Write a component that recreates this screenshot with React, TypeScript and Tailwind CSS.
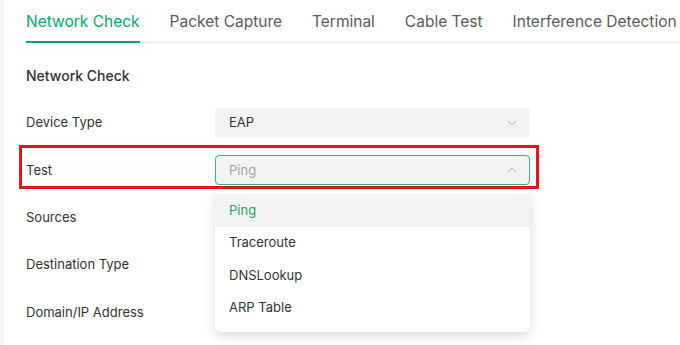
import { ChevronDown, ChevronUp } from 'lucide-react';

const TABS = ['Network Check', 'Packet Capture', 'Terminal', 'Cable Test', 'Interference Detection'];
const OPTIONS = ['Ping', 'Traceroute', 'DNSLookup', 'ARP Table'];

function Row({ label, children }: { label: string; children?: React.ReactNode }) {
  return (
    <div className="flex items-center h-[30px]">
      <div className="w-[189px] shrink-0 text-[13px] text-[#333]">{label}</div>
      <div className="w-[315px] relative">{children}</div>
    </div>
  );
}

export default function App() {
  return (
    <div
      className="flex w-[680px] h-[345px] overflow-hidden bg-white"
      style={{ fontFamily: 'Inter, "Noto Sans", sans-serif' }}
    >
      <div className="w-1 shrink-0 bg-[#f4f4f4]" />
      <div className="flex-1 pl-[22px] min-w-0">
        {/* Tabs */}
        <div className="flex gap-[30px] border-b border-[#e8e8e8] whitespace-nowrap">
          {TABS.map((t, i) => (
            <div
              key={t}
              className={
                i === 0
                  ? 'pt-[10px] pb-[7px] -mb-px border-b-2 border-[#00a870] text-[15.5px] leading-6 text-[#00a870]'
                  : 'pt-[10px] pb-[7px] -mb-px border-b-2 border-transparent text-[15.5px] leading-6 text-[#5a5a5a]'
              }
            >
              {t}
            </div>
          ))}
        </div>

        {/* Form */}
        <div className="pt-[23px]">
          <div className="text-[14px] leading-5 font-medium text-[#333]">Network Check</div>
          <div className="mt-[22px] flex flex-col gap-[17.4px]">
            <Row label="Device Type">
              <div className="h-[30px] rounded bg-[#f3f3f3] flex items-center justify-between pl-[14px] pr-[11px] text-[13px] text-[#333]">
                EAP
                <ChevronDown size={14} strokeWidth={1.5} className="text-[#a0a0a0]" />
              </div>
            </Row>
            <Row label="Test">
              <div className="h-[30px] rounded bg-[#f3f3f3] border border-[#2dbb7a] flex items-center justify-between pl-[13px] pr-[10px] text-[13px] text-[#a3a3a3]">
                Ping
                <ChevronUp size={14} strokeWidth={1.5} className="text-[#a0a0a0]" />
              </div>
              <div className="absolute left-0 top-[35px] w-full z-10 bg-white rounded-md shadow-[0_4px_12px_rgba(0,0,0,0.15)] pt-1 pb-2">
                {OPTIONS.map((o, i) => (
                  <div
                    key={o}
                    className={
                      i === 0
                        ? 'h-[32.5px] flex items-center px-[14px] text-[13px] bg-[#f3f3f3] text-[#1aa866]'
                        : 'h-[32.5px] flex items-center px-[14px] text-[13px] text-[#333]'
                    }
                  >
                    {o}
                  </div>
                ))}
              </div>
              {/* annotation box */}
              <div className="absolute -left-[196px] -top-[10px] w-[520px] h-[44px] border-[3px] border-[#e5141f] z-20 pointer-events-none" />
            </Row>
            <Row label="Sources" />
            <Row label="Destination Type" />
            <Row label="Domain/IP Address" />
          </div>
        </div>
      </div>
    </div>
  );
}
